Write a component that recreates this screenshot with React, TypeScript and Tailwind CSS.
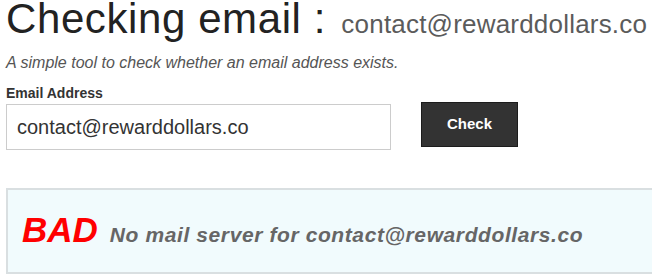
export default function App() {
  return (
    <div className="h-[280px] w-[652px] overflow-hidden bg-white font-['Liberation_Sans',Arial,sans-serif]">
      <div className="pl-[6px]">
        <h1 className="-mt-[4px] whitespace-nowrap text-[42px] font-normal leading-[46px] tracking-[0.6px] text-[#222]">
          Checking email :{" "}
          <span className="ml-[3px] text-[26px] leading-none tracking-[0.2px] text-[#5b5b5b]">
            contact@rewarddollars.co
          </span>
        </h1>

        <p className="mt-[11px] h-[20px] text-[16px] italic leading-[20px] text-[#555]">
          A simple tool to check whether an email address exists.
        </p>

        <label className="mt-[12px] block h-[16px] text-[14px] font-bold leading-[16px] text-[#333]">
          Email Address
        </label>

        <form className="mt-[1px] flex items-start" onSubmit={(e) => e.preventDefault()}>
          <input
            type="text"
            defaultValue="contact@rewarddollars.co"
            className="mt-[2px] h-[46px] w-[385px] border border-[#cccccc] bg-white px-[10px] text-[20px] text-[#333] outline-none"
          />
          <button
            type="submit"
            className="ml-[30px] h-[45px] w-[97px] border border-[#1c1c1c] bg-[#333333] text-[15px] font-bold text-white"
          >
            Check
          </button>
        </form>

        <div className="mt-[38px] h-[86px] w-[700px] border-2 border-[#d9dfe1] bg-[#f1fbfd] pl-[14px] pt-[22px]">
          <div className="flex items-baseline gap-[12px] whitespace-nowrap font-bold italic">
            <span className="text-[35px] leading-none text-[#ff0000]">BAD</span>
            <span className="text-[21px] leading-none tracking-[0.6px] text-[#666]">
              No mail server for contact@rewarddollars.co
            </span>
          </div>
        </div>
      </div>
    </div>
  );
}
